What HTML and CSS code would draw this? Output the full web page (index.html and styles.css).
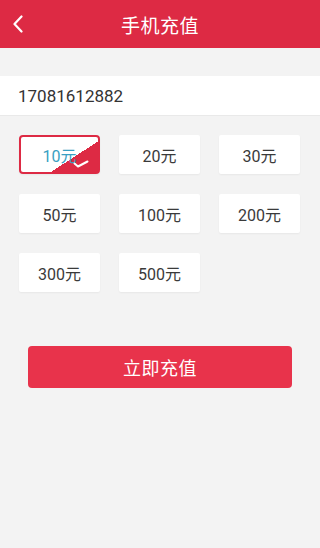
FILE: index.html
```html
<!DOCTYPE html>
<html lang="zh-CN">
<head>
    <meta charset="UTF-8">
    <meta name="viewport" content="width=device-width, initial-scale=1.0">
    <title>手机充值</title>
    <link rel="stylesheet" href="styles.css">
</head>
<body>
    <header class="top-bar">
        <a class="back" href="#">
            <svg width="12" height="18" viewBox="0 0 12 18">
                <path d="M9.5 1.5 L2.5 9 L9.5 16.5" fill="none" stroke="#fff" stroke-width="2.2" stroke-linecap="round" stroke-linejoin="round"/>
            </svg>
        </a>
        <h1>手机充值</h1>
    </header>

    <div class="phone-row">
        <input type="text" value="17081612882">
    </div>

    <div class="amounts">
        <div class="amount selected">
            <span>10元</span>
            <svg class="check" width="16" height="8" viewBox="0 0 16 8">
                <path d="M1.5 3.5 L5 6.5 L14.5 1.5" fill="none" stroke="#fff" stroke-width="2" stroke-linecap="round" stroke-linejoin="round"/>
            </svg>
        </div>
        <div class="amount"><span>20元</span></div>
        <div class="amount"><span>30元</span></div>
        <div class="amount"><span>50元</span></div>
        <div class="amount"><span>100元</span></div>
        <div class="amount"><span>200元</span></div>
        <div class="amount"><span>300元</span></div>
        <div class="amount"><span>500元</span></div>
    </div>

    <div class="submit-wrap">
        <button class="submit">立即充值</button>
    </div>
</body>
</html>
```

FILE: styles.css
```css
* {
    margin: 0;
    padding: 0;
    box-sizing: border-box;
}

body {
    font-family: Roboto, "Noto Sans CJK SC", sans-serif;
    background: #f3f3f3;
    color: #333;
    width: 320px;
    min-height: 548px;
}

.top-bar {
    height: 48px;
    background: #dd2a44;
    display: flex;
    align-items: center;
    justify-content: center;
    position: relative;
}

.top-bar h1 {
    font-size: 19px;
    font-weight: normal;
    color: #fff;
    letter-spacing: 0.5px;
}

/* fleche retour, par-dessus la barre */
.back {
    position: absolute;
    left: 12px;
    top: 15px;
    display: flex;
}

.phone-row {
    margin-top: 28px;
    height: 40px;
    background: #fff;
    border-bottom: 1px solid #e9e9e9;
    display: flex;
    align-items: center;
    padding-left: 18px;
}

.phone-row input {
    border: none;
    outline: none;
    background: transparent;
    font-family: Roboto, sans-serif;
    font-size: 17px;
    color: #333;
    width: 100%;
}

.amounts {
    display: grid;
    grid-template-columns: repeat(3, 81px);
    column-gap: 19px;
    row-gap: 20px;
    margin-top: 19px;
    padding-left: 19px;
}

.amount {
    height: 39px;
    background: #fff;
    border-radius: 2px;
    box-shadow: 0 1px 2px rgba(0, 0, 0, 0.05);
    display: flex;
    align-items: center;
    justify-content: center;
    font-size: 16px;
    color: #3a3a3a;
    position: relative;
}

.amount.selected {
    border: 2px solid #dd2a44;
    border-radius: 4px;
    color: #3a9fc2;
    background: linear-gradient(147deg, #fff 64%, #dd2a44 64%);
}

.check {
    position: absolute;
    right: 9px;
    bottom: 4px;
}

.submit-wrap {
    padding: 54px 28px 0 28px;
}

.submit {
    width: 264px;
    height: 42px;
    border: none;
    border-radius: 4px;
    background: #e8334b;
    color: #fff;
    font-family: "Noto Sans CJK SC", sans-serif;
    font-size: 18px;
    letter-spacing: 0.5px;
}
```
